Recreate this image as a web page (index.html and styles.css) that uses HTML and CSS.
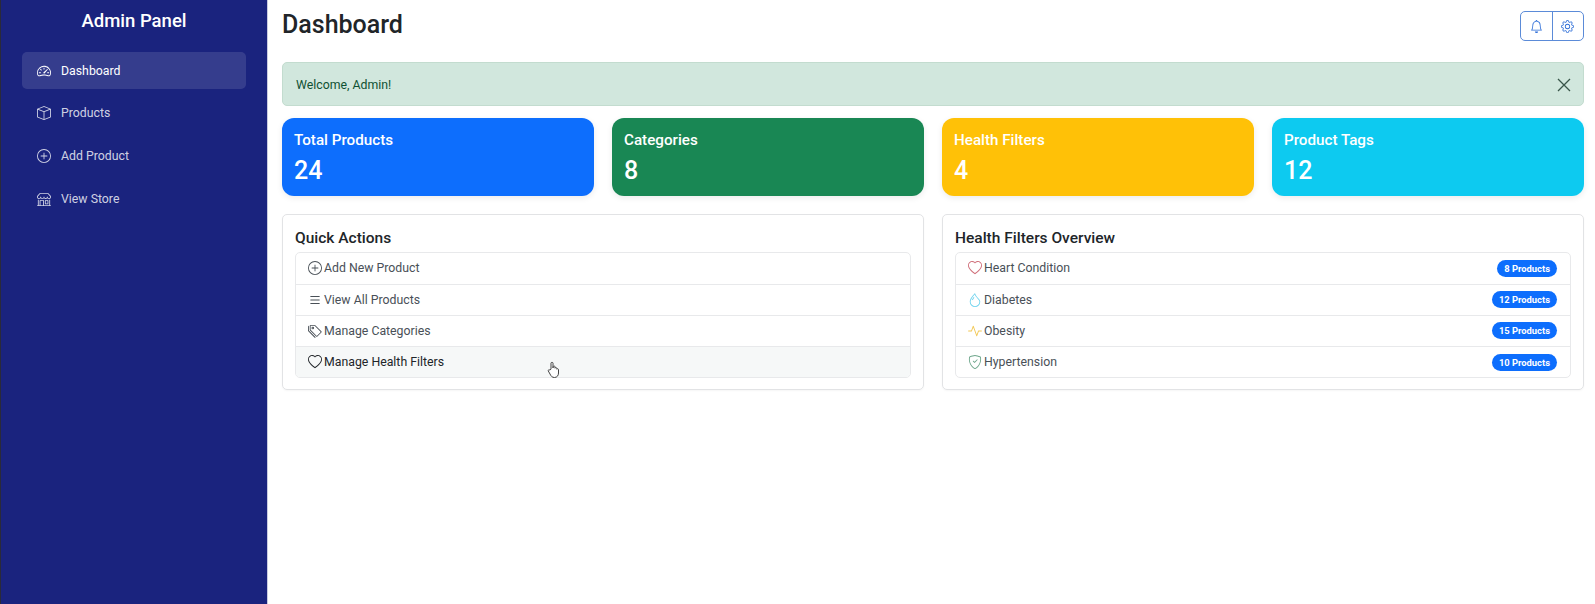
FILE: index.html
```html
<!DOCTYPE html>
<html>
    <head>
        <title>Admin Panel</title>
        <meta charset="UTF-8">
        <meta name="viewport" content="width=device-width, initial-scale=1.0">
        <link rel="stylesheet" href="styles.css">
    </head>
    <body>
        <svg class="sprite" xmlns="http://www.w3.org/2000/svg">
            <symbol id="i-speed" viewBox="0 0 16 16"><path d="M8 4a.5.5 0 0 1 .5.5V6a.5.5 0 0 1-1 0V4.5A.5.5 0 0 1 8 4zM3.732 5.732a.5.5 0 0 1 .707 0l.915.914a.5.5 0 1 1-.708.708l-.914-.915a.5.5 0 0 1 0-.707zM2 10a.5.5 0 0 1 .5-.5h1.586a.5.5 0 0 1 0 1H2.5A.5.5 0 0 1 2 10zm9.5 0a.5.5 0 0 1 .5-.5h1.5a.5.5 0 0 1 0 1H12a.5.5 0 0 1-.5-.5zm.754-4.246a.389.389 0 0 0-.527-.02L7.547 9.31a.91.91 0 1 0 1.302 1.258l3.434-4.297a.389.389 0 0 0-.029-.518z"/><path fill-rule="evenodd" d="M0 10a8 8 0 1 1 15.547 2.661c-.442 1.253-1.845 1.602-2.932 1.25C11.309 13.488 9.475 13 8 13c-1.474 0-3.31.488-4.615.911-1.087.352-2.49.003-2.932-1.25A7.988 7.988 0 0 1 0 10zm8-7a7 7 0 0 0-6.603 9.329c.203.575.923.876 1.68.63C4.397 12.533 6.358 12 8 12s3.604.532 4.923.96c.757.245 1.477-.056 1.68-.631A7 7 0 0 0 8 3z"/></symbol>
            <symbol id="i-box" viewBox="0 0 16 16"><path d="M8.186 1.113a.5.5 0 0 0-.372 0L1.846 3.5 8 5.961 14.154 3.5 8.186 1.113zM15 4.239l-6.5 2.6v7.922l6.5-2.6V4.24zM7.5 14.762V6.838L1 4.239v7.925l6.5 2.6zM7.443.184a1.5 1.5 0 0 1 1.114 0l7.129 2.852A.5.5 0 0 1 16 3.5v8.662a1 1 0 0 1-.629.928l-7.185 2.874a.5.5 0 0 1-.372 0L.63 13.09a1 1 0 0 1-.63-.928V3.5a.5.5 0 0 1 .314-.464L7.443.184z"/></symbol>
            <symbol id="i-plus" viewBox="0 0 16 16"><path d="M8 15A7 7 0 1 1 8 1a7 7 0 0 1 0 14zm0 1A8 8 0 1 0 8 0a8 8 0 0 0 0 16z"/><path d="M8 4a.5.5 0 0 1 .5.5v3h3a.5.5 0 0 1 0 1h-3v3a.5.5 0 0 1-1 0v-3h-3a.5.5 0 0 1 0-1h3v-3A.5.5 0 0 1 8 4z"/></symbol>
            <symbol id="i-shop" viewBox="0 0 16 16"><path d="M2.97 1.35A1 1 0 0 1 3.73 1h8.54a1 1 0 0 1 .76.35l2.609 3.044A1.5 1.5 0 0 1 16 5.37v.255a2.375 2.375 0 0 1-4.25 1.458A2.371 2.371 0 0 1 9.875 8 2.37 2.37 0 0 1 8 7.083 2.37 2.37 0 0 1 6.125 8a2.37 2.37 0 0 1-1.875-.917A2.375 2.375 0 0 1 0 5.625V5.37a1.5 1.5 0 0 1 .361-.976l2.61-3.045zm1.78 4.275a1.375 1.375 0 0 0 2.75 0 .5.5 0 0 1 1 0 1.375 1.375 0 0 0 2.75 0 .5.5 0 0 1 1 0 1.375 1.375 0 1 0 2.75 0V5.37a.5.5 0 0 0-.12-.325L12.27 2H3.73L1.12 5.045A.5.5 0 0 0 1 5.37v.255a1.375 1.375 0 0 0 2.75 0 .5.5 0 0 1 1 0zM1.5 8.5A.5.5 0 0 1 2 9v6h1v-5a1 1 0 0 1 1-1h3a1 1 0 0 1 1 1v5h6V9a.5.5 0 0 1 1 0v6h.5a.5.5 0 0 1 0 1H.5a.5.5 0 0 1 0-1H1V9a.5.5 0 0 1 .5-.5zM4 15h3v-5H4v5zm5-5a1 1 0 0 1 1-1h2a1 1 0 0 1 1 1v3a1 1 0 0 1-1 1h-2a1 1 0 0 1-1-1v-3zm3 0h-2v3h2v-3z"/></symbol>
            <symbol id="i-list" viewBox="0 0 16 16"><path fill-rule="evenodd" d="M2.5 12a.5.5 0 0 1 .5-.5h10a.5.5 0 0 1 0 1H3a.5.5 0 0 1-.5-.5zm0-4a.5.5 0 0 1 .5-.5h10a.5.5 0 0 1 0 1H3a.5.5 0 0 1-.5-.5zm0-4a.5.5 0 0 1 .5-.5h10a.5.5 0 0 1 0 1H3a.5.5 0 0 1-.5-.5z"/></symbol>
            <symbol id="i-tags" viewBox="0 0 16 16"><path d="M3 2v4.586l7 7L14.586 9l-7-7H3zM2 2a1 1 0 0 1 1-1h4.586a1 1 0 0 1 .707.293l7 7a1 1 0 0 1 0 1.414l-4.586 4.586a1 1 0 0 1-1.414 0l-7-7A1 1 0 0 1 2 6.586V2z"/><path d="M5.5 5a.5.5 0 1 1 0-1 .5.5 0 0 1 0 1zm0 1a1.5 1.5 0 1 0 0-3 1.5 1.5 0 0 0 0 3zM1 7.086a1 1 0 0 0 .293.707L8.75 15.25l-.043.043a1 1 0 0 1-1.414 0l-7-7A1 1 0 0 1 0 7.586V3a1 1 0 0 1 1-1v5.086z"/></symbol>
            <symbol id="i-heart" viewBox="0 0 16 16"><path d="m8 2.748-.717-.737C5.6.281 2.514.878 1.4 3.053c-.523 1.023-.641 2.5.314 4.385.92 1.815 2.834 3.989 6.286 6.357 3.452-2.368 5.365-4.542 6.286-6.357.955-1.886.838-3.362.314-4.385C13.486.878 10.4.28 8.717 2.01L8 2.748zM8 15C-7.333 4.868 3.279-3.04 7.824 1.143c.06.055.119.112.176.171a3.12 3.12 0 0 1 .176-.17C12.72-3.042 23.333 4.867 8 15z"/></symbol>
            <symbol id="i-droplet" viewBox="0 0 16 16"><path fill-rule="evenodd" d="M7.21.8C7.69.295 8 0 8 0c.109.363.234.708.371 1.038.812 1.946 2.073 3.35 3.197 4.6C12.878 7.096 14 8.345 14 10a6 6 0 0 1-12 0C2 6.668 5.58 2.517 7.21.8zm.413 1.021A31.25 31.25 0 0 0 5.794 3.99c-.726.95-1.436 2.008-1.96 3.07C3.304 8.133 3 9.138 3 10a5 5 0 0 0 10 0c0-1.201-.796-2.157-2.181-3.7l-.03-.032C9.75 5.11 8.5 3.72 7.623 1.82z"/><path fill-rule="evenodd" d="M4.553 7.776c.82-1.641 1.717-2.753 2.093-3.13l.708.708c-.29.29-1.128 1.311-1.907 2.87l-.894-.448z"/></symbol>
            <symbol id="i-activity" viewBox="0 0 16 16"><path fill-rule="evenodd" d="M6 2a.5.5 0 0 1 .47.33L10 12.036l1.53-4.208A.5.5 0 0 1 12 7.5h3.5a.5.5 0 0 1 0 1h-3.15l-1.88 5.17a.5.5 0 0 1-.94 0L6 3.964 4.47 8.171A.5.5 0 0 1 4 8.5H.5a.5.5 0 0 1 0-1h3.15l1.88-5.17A.5.5 0 0 1 6 2Z"/></symbol>
            <symbol id="i-shield" viewBox="0 0 16 16"><path d="M5.338 1.59a61.44 61.44 0 0 0-2.837.856.481.481 0 0 0-.328.39c-.554 4.157.726 7.19 2.253 9.188a10.725 10.725 0 0 0 2.287 2.233c.346.244.652.42.893.533.12.057.218.095.293.118a.55.55 0 0 0 .101.025.615.615 0 0 0 .1-.025c.076-.023.174-.061.294-.118.24-.113.547-.29.893-.533a10.726 10.726 0 0 0 2.287-2.233c1.527-1.997 2.807-5.031 2.253-9.188a.48.48 0 0 0-.328-.39c-.651-.213-1.75-.56-2.837-.855C9.552 1.29 8.531 1.067 8 1.067c-.53 0-1.552.223-2.662.524zM5.072.56C6.157.265 7.31 0 8 0s1.843.265 2.928.56c1.11.3 2.229.655 2.887.87a1.54 1.54 0 0 1 1.044 1.262c.596 4.477-.787 7.795-2.465 9.99a11.775 11.775 0 0 1-2.517 2.453 7.159 7.159 0 0 1-1.048.625c-.28.132-.581.24-.829.24s-.548-.108-.829-.24a7.158 7.158 0 0 1-1.048-.625 11.777 11.777 0 0 1-2.517-2.453C1.928 10.487.545 7.169 1.141 2.692A1.54 1.54 0 0 1 2.185 1.43 62.456 62.456 0 0 1 5.072.56z"/><path d="M10.854 5.146a.5.5 0 0 1 0 .708l-3 3a.5.5 0 0 1-.708 0l-1.5-1.5a.5.5 0 1 1 .708-.708L7.5 7.793l2.646-2.647a.5.5 0 0 1 .708 0z"/></symbol>
            <symbol id="i-bell" viewBox="0 0 16 16"><path d="M8 16a2 2 0 0 0 2-2H6a2 2 0 0 0 2 2zM8 1.918l-.797.161A4.002 4.002 0 0 0 4 6c0 .628-.134 2.197-.459 3.742-.16.767-.376 1.566-.663 2.258h10.244c-.287-.692-.502-1.49-.663-2.258C12.134 8.197 12 6.628 12 6a4.002 4.002 0 0 0-3.203-3.92L8 1.917zM14.22 12c.223.447.481.801.78 1H1c.299-.199.557-.553.78-1C2.68 10.2 3 6.88 3 6c0-2.42 1.72-4.44 4.005-4.901a1 1 0 1 1 1.99 0A5.002 5.002 0 0 1 13 6c0 .88.32 4.2 1.22 6z"/></symbol>
            <symbol id="i-gear" viewBox="0 0 16 16"><path d="M8 4.754a3.246 3.246 0 1 0 0 6.492 3.246 3.246 0 0 0 0-6.492zM5.754 8a2.246 2.246 0 1 1 4.492 0 2.246 2.246 0 0 1-4.492 0z"/><path d="M9.796 1.343c-.527-1.79-3.065-1.79-3.592 0l-.094.319a.873.873 0 0 1-1.255.52l-.292-.16c-1.64-.892-3.433.902-2.54 2.541l.159.292a.873.873 0 0 1-.52 1.255l-.319.094c-1.79.527-1.79 3.065 0 3.592l.319.094a.873.873 0 0 1 .52 1.255l-.16.292c-.892 1.64.901 3.434 2.541 2.54l.292-.159a.873.873 0 0 1 1.255.52l.094.319c.527 1.79 3.065 1.79 3.592 0l.094-.319a.873.873 0 0 1 1.255-.52l.292.16c1.64.893 3.434-.902 2.54-2.541l-.159-.292a.873.873 0 0 1 .52-1.255l.319-.094c1.79-.527 1.79-3.065 0-3.592l-.319-.094a.873.873 0 0 1-.52-1.255l.16-.292c.893-1.64-.902-3.433-2.541-2.54l-.292.159a.873.873 0 0 1-1.255-.52l-.094-.319zm-2.633.283c.246-.835 1.428-.835 1.674 0l.094.319a1.873 1.873 0 0 0 2.693 1.115l.291-.16c.764-.415 1.6.42 1.184 1.185l-.159.292a1.873 1.873 0 0 0 1.116 2.692l.318.094c.835.246.835 1.428 0 1.674l-.319.094a1.873 1.873 0 0 0-1.115 2.693l.16.291c.415.764-.42 1.6-1.185 1.184l-.291-.159a1.873 1.873 0 0 0-2.693 1.116l-.094.318c-.246.835-1.428.835-1.674 0l-.094-.319a1.873 1.873 0 0 0-2.692-1.115l-.292.16c-.764.415-1.6-.42-1.184-1.185l.159-.291A1.873 1.873 0 0 0 1.945 8.93l-.319-.094c-.835-.246-.835-1.428 0-1.674l.319-.094A1.873 1.873 0 0 0 3.06 4.377l-.16-.292c-.415-.764.42-1.6 1.185-1.184l.292.159a1.873 1.873 0 0 0 2.692-1.115l.094-.319z"/></symbol>
        </svg>

        <div class="app">
            <aside class="sidebar">
                <h2 class="brand">Admin Panel</h2>
                <nav class="side-nav">
                    <a class="side-link active"><svg class="icon"><use href="#i-speed"/></svg>Dashboard</a>
                    <a class="side-link"><svg class="icon"><use href="#i-box"/></svg>Products</a>
                    <a class="side-link"><svg class="icon"><use href="#i-plus"/></svg>Add Product</a>
                    <a class="side-link"><svg class="icon"><use href="#i-shop"/></svg>View Store</a>
                </nav>
            </aside>

            <main class="main">
                <header class="top-bar">
                    <h1 class="page-title">Dashboard</h1>
                    <div class="btn-group">
                        <button class="btn"><svg class="icon small"><use href="#i-bell"/></svg></button>
                        <button class="btn"><svg class="icon small"><use href="#i-gear"/></svg></button>
                    </div>
                </header>

                <div class="alert">
                    <span>Welcome, Admin!</span>
                    <svg class="alert-close" viewBox="0 0 16 16"><path d="M2 2 14 14M14 2 2 14"/></svg>
                </div>

                <section class="stats">
                    <div class="stat blue"><h5>Total Products</h5><p>24</p></div>
                    <div class="stat green"><h5>Categories</h5><p>8</p></div>
                    <div class="stat yellow"><h5>Health Filters</h5><p>4</p></div>
                    <div class="stat cyan"><h5>Product Tags</h5><p>12</p></div>
                </section>

                <section class="panels">
                    <div class="panel">
                        <h5 class="panel-title">Quick Actions</h5>
                        <ul class="list">
                            <li class="list-row"><span class="row-label"><svg class="icon"><use href="#i-plus"/></svg>Add New Product</span></li>
                            <li class="list-row"><span class="row-label"><svg class="icon"><use href="#i-list"/></svg>View All Products</span></li>
                            <li class="list-row"><span class="row-label"><svg class="icon"><use href="#i-tags"/></svg>Manage Categories</span></li>
                            <li class="list-row hover"><span class="row-label"><svg class="icon"><use href="#i-heart"/></svg>Manage Health Filters</span></li>
                        </ul>
                    </div>
                    <div class="panel">
                        <h5 class="panel-title">Health Filters Overview</h5>
                        <ul class="list">
                            <li class="list-row"><span class="row-label"><svg class="icon c-red"><use href="#i-heart"/></svg>Heart Condition</span><span class="badge">8 Products</span></li>
                            <li class="list-row"><span class="row-label"><svg class="icon c-cyan"><use href="#i-droplet"/></svg>Diabetes</span><span class="badge">12 Products</span></li>
                            <li class="list-row"><span class="row-label"><svg class="icon c-yellow"><use href="#i-activity"/></svg>Obesity</span><span class="badge">15 Products</span></li>
                            <li class="list-row"><span class="row-label"><svg class="icon c-green"><use href="#i-shield"/></svg>Hypertension</span><span class="badge">10 Products</span></li>
                        </ul>
                    </div>
                </section>
            </main>
        </div>

        <svg class="cursor" viewBox="0 0 14 18"><path d="M4 8V2.2C4 1 6 1 6 2.2V7L6.2 5.6C6.4 4.700 8 4.800 8 5.800V7.200C8.200 6.300 9.800 6.400 9.800 7.400V8.200C10 7.500 11.500 7.600 11.500 8.600V12C11.500 14.500 10 16.500 7.500 16.500C5 16.500 4 15 3 13L1.300 10C.8 9 2.200 8.200 3 9.200Z"/></svg>
    </body>
</html>
```
FILE: styles.css
```css
*{
    box-sizing: border-box;
}
html, body{
    height: 100%;
}
body{
    margin: 0;
    background-color: white;
    color: #212529;
    font-family: Roboto, "Noto Sans", sans-serif;
    font-size: 12.3px;
    overflow: hidden;
}
.sprite{
    display: none;
}
.icon{
    width: 14px;
    height: 14px;
    fill: currentColor;
    flex: none;
}
.icon.small{
    width: 13px;
    height: 13px;
}
.app{
    display: flex;
    height: 100%;
}

.sidebar{
    width: 268px;
    flex: none;
    background-color: #1a237e;
    border-left: 1px solid #2a2a3a;
    border-right: 1px solid #c9cbe0;
    padding: 9px 21px 0 21px;
}
.brand{
    margin: 0 0 19px 0;
    height: 24px;
    line-height: 24px;
    color: white;
    font-size: 18.5px;
    font-weight: 500;
    text-align: center;
}
.side-nav{
    display: flex;
    flex-direction: column;
    gap: 6px;
}
.side-link{
    display: flex;
    align-items: center;
    gap: 10px;
    height: 36.6px;
    padding: 1px 15px 0 15px;
    border-radius: 5px;
    color: rgba(255,255,255,0.8);
}
.side-link.active{
    background-color: rgba(255,255,255,0.12);
    color: white;
}

.main{
    flex: 1;
    min-width: 0;
    padding: 11px 11px 0 14px;
}
.top-bar{
    display: flex;
    justify-content: space-between;
    align-items: flex-start;
    height: 51px;
}
.page-title{
    margin: 1px 0 0 0;
    font-size: 25px;
    font-weight: 500;
    line-height: 26px;
}
.btn-group{
    display: flex;
    height: 30px;
    width: 64px;
    border: 1px solid #5b8bd8;
    border-radius: 5px;
}
.btn{
    flex: 1;
    padding: 0;
    border: 0;
    background: none;
    color: #2f6fd8;
    display: flex;
    align-items: center;
    justify-content: center;
}
.btn + .btn{
    border-left: 1px solid #5b8bd8;
}

.alert{
    display: flex;
    justify-content: space-between;
    align-items: center;
    height: 44px;
    padding: 1px 11px 0 13px;
    background-color: #d1e7dd;
    border: 1px solid #c3dccf;
    border-radius: 5px;
    color: #0f5132;
}
.alert-close{
    width: 16px;
    height: 16px;
    fill: none;
    stroke: #39564a;
    stroke-width: 1.3;
}

.stats{
    display: grid;
    grid-template-columns: repeat(4, 1fr);
    gap: 18px;
    margin-top: 12px;
}
.stat{
    height: 78px;
    padding: 12px 12px;
    border-radius: 12px;
    color: white;
    box-shadow: 0 2px 6px rgba(0,0,0,0.08);
}
.stat h5{
    margin: 0;
    font-size: 15.2px;
    font-weight: 500;
    line-height: 20px;
}
.stat p{
    margin: 6px 0 0 0;
    font-size: 25px;
    font-weight: 500;
    line-height: 30px;
}
.blue{ background-color: #0d6efd; }
.green{ background-color: #198754; }
.yellow{ background-color: #ffc107; }
.cyan{ background-color: #0dcaf0; }

.panels{
    display: grid;
    grid-template-columns: repeat(2, 1fr);
    gap: 18px;
    margin-top: 18px;
}
.panel{
    height: 176px;
    padding: 13.500px 12px 0 12px;
    border: 1px solid #e2e3e5;
    border-radius: 5px;
    box-shadow: 0 1px 2px rgba(0,0,0,0.04);
}
.panel-title{
    margin: 0 0 5px 0;
    font-size: 15.5px;
    font-weight: 500;
    line-height: 18px;
}
.list{
    margin: 0;
    padding: 0;
    list-style: none;
    border: 1px solid #e8e9eb;
    border-radius: 5px;
    overflow: hidden;
}
.list-row{
    display: flex;
    justify-content: space-between;
    align-items: center;
    height: 31.2px;
    padding: 0 13px 0 12px;
    color: #495057;
}
.list-row + .list-row{
    border-top: 1px solid #e8e9eb;
}
.list-row.hover{
    background-color: #f6f8f8;
    color: #212529;
}
.row-label{
    display: flex;
    align-items: center;
    gap: 2px;
}
.c-red{ color: #cf6d78; }
.c-cyan{ color: #6fd3ee; }
.c-yellow{ color: #f2c855; }
.c-green{ color: #6ea78c; }
.badge{
    padding: 3px 7px;
    border-radius: 10px;
    background-color: #0d6efd;
    color: white;
    font-size: 9.4px;
    font-weight: 700;
    line-height: 11px;
}

.cursor{
    position: absolute;
    left: 547px;
    top: 361px;
    width: 14px;
    height: 18px;
    fill: white;
    stroke: #444;
    stroke-width: 1;
}
```
